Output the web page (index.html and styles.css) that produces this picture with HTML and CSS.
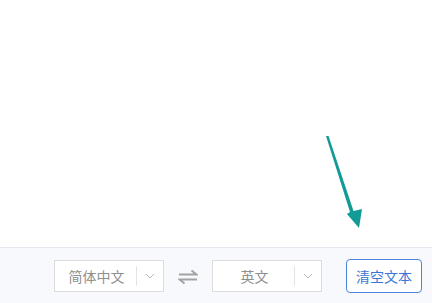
FILE: index.html
```html
<!DOCTYPE html>
<html lang="zh">
<head>
<meta charset="utf-8">
<link rel="stylesheet" href="styles.css">
</head>
<body>
<div class="page">
  <div class="editor">
    <svg class="pointer" width="432" height="247" viewBox="0 0 432 247">
      <polygon points="326,136 328.5,136 353.5,211 362,209 359,228 347,214 350,212" fill="#119a96"/>
    </svg>
  </div>
  <div class="footer">
    <div class="select">
      <span class="select-label">简体中文</span>
      <span class="select-arrow">
        <svg width="10" height="6" viewBox="0 0 10 6"><path d="M1 1 L5 5 L9 1" fill="none" stroke="#b5b5b5" stroke-width="1"/></svg>
      </span>
    </div>
    <div class="swap">
      <svg width="20" height="16" viewBox="0 0 20 16">
        <path d="M1 5.5 H18.5 L13.5 1.5" fill="none" stroke="#a3a3a3" stroke-width="2"/>
        <path d="M19 10.5 H1.5 L6.5 14.5" fill="none" stroke="#a3a3a3" stroke-width="2"/>
      </svg>
    </div>
    <div class="select">
      <span class="select-label">英文</span>
      <span class="select-arrow">
        <svg width="10" height="6" viewBox="0 0 10 6"><path d="M1 1 L5 5 L9 1" fill="none" stroke="#b5b5b5" stroke-width="1"/></svg>
      </span>
    </div>
    <button class="clear-btn">清空文本</button>
  </div>
</div>
</body>
</html>
```
FILE: styles.css
```css
html, body {
  margin: 0;
  padding: 0;
  background: #ffffff;
}
body {
  font-family: "Noto Sans CJK SC", "Noto Sans", sans-serif;
}
.page {
  width: 432px;
  height: 303px;
  display: flex;
  flex-direction: column;
}
.editor {
  position: relative;
  height: 247px;
  background: #ffffff;
}
.pointer {
  position: absolute;
  left: 0;
  top: 0;
}
.footer {
  flex: 1;
  border-top: 1px solid #e4e9ef;
  background: #f7f9fc;
  display: flex;
  align-items: center;
  justify-content: flex-end;
  padding-right: 10px;
}
.select {
  width: 110px;
  height: 32px;
  box-sizing: border-box;
  border: 1px solid #dcdcdc;
  background: #ffffff;
  display: flex;
  align-items: center;
}
.select-label {
  flex: 1;
  text-align: center;
  font-size: 14px;
  color: #8f8f8f;
  line-height: 20px;
  padding-left: 2px;
}
.select-arrow {
  width: 26px;
  height: 20px;
  border-left: 1px solid #e3e3e3;
  display: flex;
  align-items: center;
  justify-content: center;
}
.swap {
  width: 48px;
  display: flex;
  justify-content: center;
  align-items: center;
  padding-top: 2px;
}
.clear-btn {
  margin-left: 24px;
  width: 76px;
  height: 34px;
  box-sizing: border-box;
  border: 1px solid #4a84de;
  border-radius: 4px;
  background: #ffffff;
  color: #3b76d6;
  font-family: "Noto Sans CJK SC", "Noto Sans", sans-serif;
  font-size: 14px;
  padding: 0;
  line-height: 20px;
}
```
